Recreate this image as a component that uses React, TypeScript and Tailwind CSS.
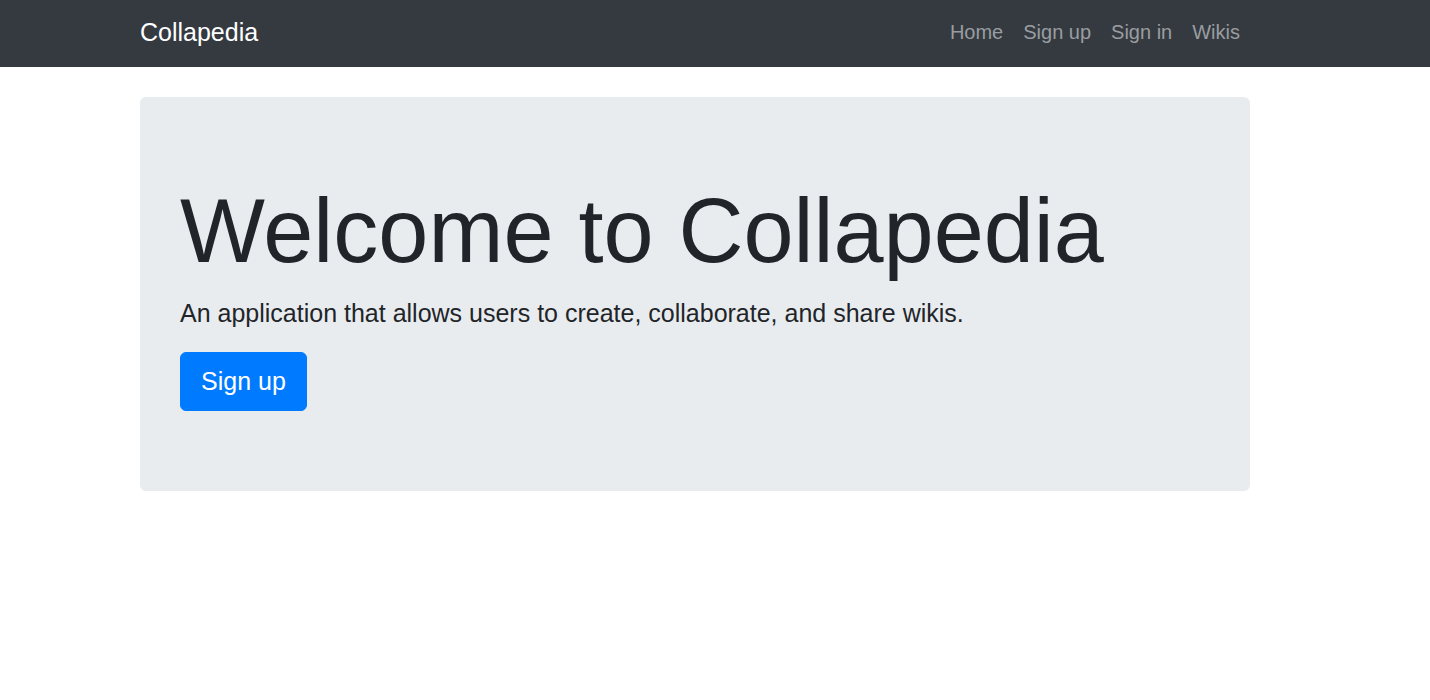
const App = () => {
  const links = ['Home', 'Sign up', 'Sign in', 'Wikis'];

  return (
    <div className="min-h-screen bg-white font-['Liberation_Sans',Arial,sans-serif] text-[#212529]">
      {/* Navbar */}
      <nav className="h-[67px] bg-[#343a40]">
        <div className="flex h-full w-[1110px] ml-[140px] items-center justify-between pb-[2px]">
          <a href="#" className="text-[25px] leading-[37px] text-white">Collapedia</a>
          <ul className="flex mb-[2px]">
            {links.map((link) => (
              <li key={link}>
                <a href="#" className="block px-[10px] text-[20px] leading-[30px] text-[#9a9da0]">
                  {link}
                </a>
              </li>
            ))}
          </ul>
        </div>
      </nav>

      {/* Jumbotron */}
      <main className="ml-[140px] mt-[30px] w-[1110px] rounded-[6px] bg-[#e9ecef] px-[40px] pt-[80px] pb-[80px]">
        <h1 className="mb-[10px] text-[90px] font-light leading-[108px]">Welcome to Collapedia</h1>
        <p className="mb-[19px] text-[25px] leading-[37.5px]">
          An application that allows users to create, collaborate, and share wikis.
        </p>
        <a
          href="#"
          className="inline-block rounded-[6px] border border-[#007bff] bg-[#007bff] px-[20px] py-[10px] text-[25px] leading-[37.5px] text-white"
        >
          Sign up
        </a>
      </main>
    </div>
  );
};

export default App;
